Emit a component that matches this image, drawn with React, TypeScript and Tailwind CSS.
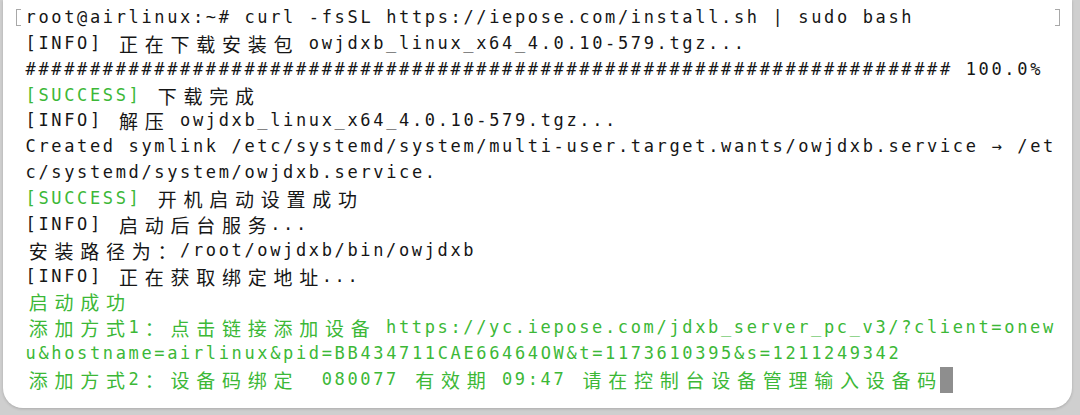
import React from "react";

type Seg = [string, "k" | "g"];

const lines: Seg[][] = [
  [["root@airlinux:~# curl -fsSL https://iepose.com/install.sh | sudo bash", "k"]],
  [["[INFO] 正在下载安装包 owjdxb_linux_x64_4.0.10-579.tgz...", "k"]],
  [["######################################################################## 100.0%", "k"]],
  [["[SUCCESS]", "g"], [" 下载完成", "k"]],
  [["[INFO] 解压 owjdxb_linux_x64_4.0.10-579.tgz...", "k"]],
  [["Created symlink /etc/systemd/system/multi-user.target.wants/owjdxb.service → /et", "k"]],
  [["c/systemd/system/owjdxb.service.", "k"]],
  [["[SUCCESS]", "g"], [" 开机启动设置成功", "k"]],
  [["[INFO] 启动后台服务...", "k"]],
  [["安装路径为：/root/owjdxb/bin/owjdxb", "k"]],
  [["[INFO] 正在获取绑定地址...", "k"]],
  [["启动成功", "g"]],
  [["添加方式1：点击链接添加设备 https://yc.iepose.com/jdxb_server_pc_v3/?client=onew", "g"]],
  [["u&hostname=airlinux&pid=BB434711CAE66464OW&t=1173610395&s=1211249342", "g"]],
  [["添加方式2：设备码绑定  080077 有效期 09:47 请在控制台设备管理输入设备码", "g"]],
];

function renderText(text: string, color: "k" | "g", keyBase: string) {
  const out: React.ReactNode[] = [];
  let buf = "";
  let i = 0;
  const colorCls = color === "g" ? "text-[#3cb837]" : "text-[#161616]";
  const flush = () => {
    if (buf) {
      out.push(
        <span key={`${keyBase}-a${i++}`} className={`tracking-[2.645px] ${colorCls}`}>
          {buf}
        </span>
      );
      buf = "";
    }
  };
  for (const ch of text) {
    const cp = ch.codePointAt(0) ?? 0;
    if (cp >= 0x2e80) {
      flush();
      out.push(
        <span
          key={`${keyBase}-c${i++}`}
          className={`inline-block align-top h-[25.86px] w-[25.76px] text-center font-['Noto_Sans_CJK_SC',sans-serif] text-[19px] leading-[25.86px] ${colorCls}`}
        >
          {ch}
        </span>
      );
    } else {
      buf += ch;
    }
  }
  flush();
  return out;
}

export default function App() {
  return (
    <div className="w-[1080px] h-[415px] overflow-hidden bg-[#cfcfcf] flex">
      <div className="ml-[3px] w-[1069px] h-[408px] bg-white rounded-b-[20px] shadow-[0_1px_3px_rgba(0,0,0,0.18)] pt-[5px] pl-[13px] pr-[12px] font-['DejaVu_Sans_Mono',monospace] text-[17px]">
        {lines.map((segs, li) => (
          <div key={li} className="h-[25.86px] leading-[25.86px] whitespace-pre flex items-center">
            <div className="w-[9.5px] h-full flex items-center">
              {li === 0 && (
                <span className="inline-block w-[5px] h-[17px] border-[1.5px] border-r-0 border-[#a8a8a8]" />
              )}
            </div>
            <div className="flex-1 h-full">
              {segs.map(([t, c], si) => renderText(t, c, `${li}-${si}`))}
              {li === lines.length - 1 && (
                <span className="inline-block w-[12.88px] h-[25.86px] align-top bg-[#8e8e8e]" />
              )}
            </div>
            {li === 0 && (
              <span className="inline-block w-[5px] h-[17px] border-[1.5px] border-l-0 border-[#a8a8a8]" />
            )}
          </div>
        ))}
      </div>
    </div>
  );
}
